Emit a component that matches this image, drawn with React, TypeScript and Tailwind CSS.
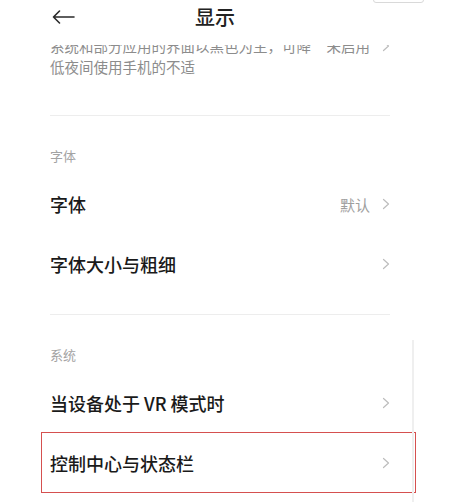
import { ReactNode } from "react";

const font = { fontFamily: '"Noto Sans CJK SC", "Noto Sans", sans-serif' };

function Chevron() {
  return (
    <svg width="8" height="12" viewBox="0 0 8 12" fill="none" className="shrink-0">
      <path d="M1.5 1.5 L6.5 6 L1.5 10.5" stroke="#bdbdbd" strokeWidth="1.2" strokeLinecap="round" strokeLinejoin="round" />
    </svg>
  );
}

function SectionLabel({ children }: { children: ReactNode }) {
  return (
    <div className="h-[58px] flex items-end pb-[9px]">
      <span className="text-[13px] leading-[18px] text-[#a3a3a3]">{children}</span>
    </div>
  );
}

function Row({ title, value, marked }: { title: string; value?: string; marked?: boolean }) {
  return (
    <div className="relative h-[60px] flex items-center justify-between">
      <span className="text-[18px] leading-none font-medium text-[#1a1a1a]">{title}</span>
      <div className="flex items-center gap-[12px]">
        {value && <span className="text-[15px] leading-none text-[#9e9e9e]">{value}</span>}
        <Chevron />
      </div>
      {/* 标注框 */}
      {marked && (
        <div className="absolute -left-[9px] -right-[26px] -top-[1px] bottom-0 border border-[#d5504f]" />
      )}
    </div>
  );
}

export default function App() {
  return (
    <div className="relative w-[455px] h-[502px] overflow-hidden bg-white" style={font}>
      {/* 顶部标题栏 */}
      <div className="relative z-10 h-[45px] bg-white">
        <div className="h-[34px] flex items-center pl-[52px]">
          <svg width="23" height="14" viewBox="0 0 23 14" fill="none">
            <path d="M22 7 H1.5 M7.5 1 L1.5 7 L7.5 13" stroke="#2a2a2a" strokeWidth="1.6" strokeLinecap="round" strokeLinejoin="round" />
          </svg>
          <span className="ml-[120px] text-[20px] leading-none font-medium text-[#222]">显示</span>
        </div>
      </div>
      <div className="absolute z-20 left-[373px] -top-[10px] w-[51px] h-[13px] rounded-[3px] border border-[#d9d9d9] bg-white" />

      <div className="pl-[50px] pr-[65px]">
        {/* 深色模式说明（被标题栏遮住一半） */}
        <div className="-mt-[10px] flex items-start justify-between">
          <p className="w-[262px] text-[14.5px] leading-[21px] text-[#8c8c8c]">
            系统和部分应用的界面以黑色为主，可降低夜间使用手机的不适
          </p>
          <div className="flex items-center gap-[12px] h-[21px]">
            <span className="text-[14.5px] text-[#8c8c8c]">未启用</span>
            <Chevron />
          </div>
        </div>

        <div className="mt-[38px] h-px bg-[#ededed]" />
        <SectionLabel>字体</SectionLabel>
        <Row title="字体" value="默认" />
        <Row title="字体大小与粗细" />

        <div className="mt-[20px] h-px bg-[#ededed]" />
        <SectionLabel>系统</SectionLabel>
        <Row title="当设备处于 VR 模式时" />
        <Row title="控制中心与状态栏" marked />
      </div>

      <div className="absolute left-[412px] top-[340px] bottom-0 w-[2px] bg-[#efefef]" />
    </div>
  );
}
